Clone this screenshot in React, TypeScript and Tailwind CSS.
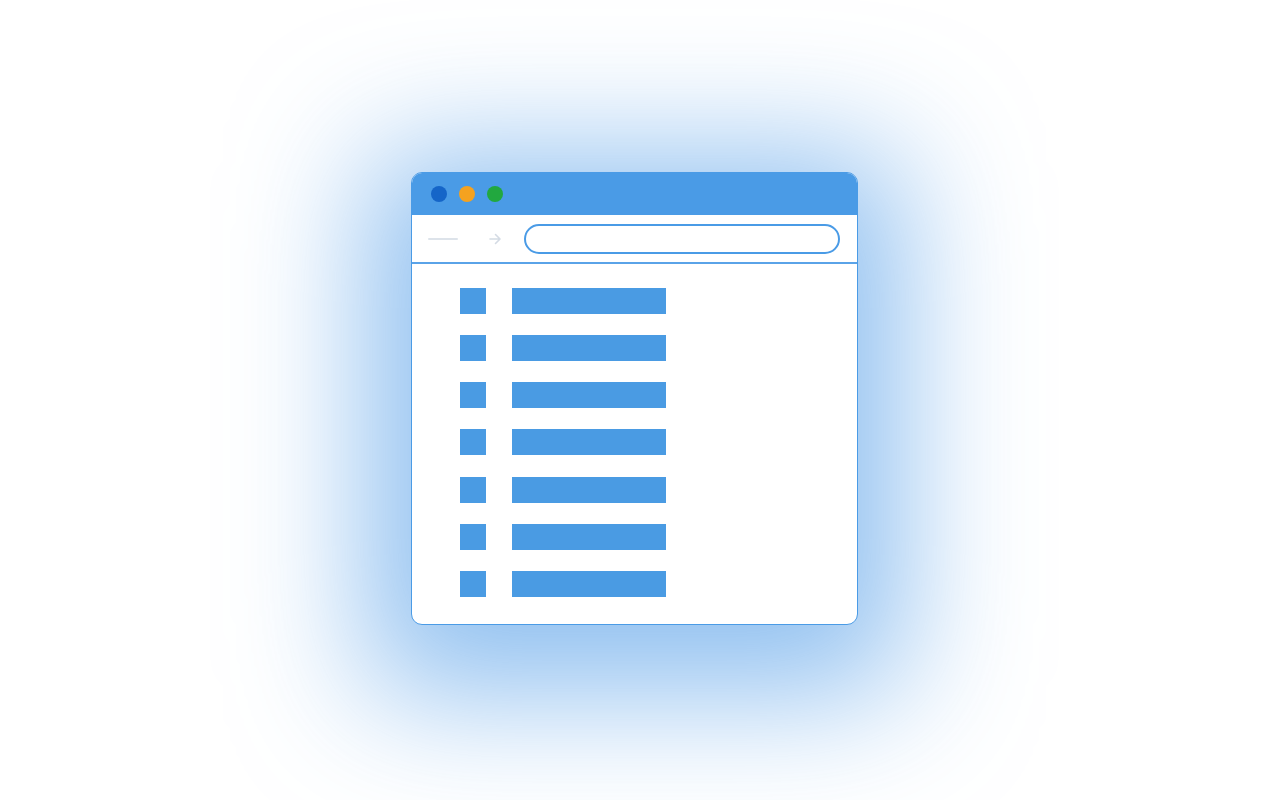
import React from "react";

const rows = [0, 1, 2, 3, 4, 5, 6];

export default function App() {
  return (
    <div className="flex h-[800px] w-[1280px] items-center justify-center overflow-hidden bg-white pr-[12px] pb-[4px]">
      <div className="flex h-[453px] w-[447px] flex-col overflow-hidden rounded-[11px] border-[1.5px] border-[#4a9be6] bg-white shadow-[0_25px_130px_45px_rgba(70,150,230,0.6)]">
        {/* title bar */}
        <div className="flex h-[42px] shrink-0 items-center gap-[12px] bg-[#4a9be6] pl-[19px]">
          <span className="h-[16px] w-[16px] rounded-full bg-[#1565c8]" />
          <span className="h-[16px] w-[16px] rounded-full bg-[#f5a21f]" />
          <span className="h-[16px] w-[16px] rounded-full bg-[#22a83f]" />
        </div>
        {/* nav bar */}
        <div className="flex h-[49px] shrink-0 items-center border-b-2 border-[#5aa3e8] pl-[16px] pr-[17px] pt-[2px]">
          <span className="h-[2px] w-[30px] rounded bg-[#dde3ea]" />
          <svg className="ml-[29px]" width="16" height="16" viewBox="0 0 16 16" fill="none">
            <path d="M3 8h9M8.5 3.5l4.5 4.5-4.5 4.5" stroke="#d4dbe4" strokeWidth="1.6" strokeLinecap="round" strokeLinejoin="round" />
          </svg>
          <div className="ml-[21px] h-[30px] flex-1 rounded-full border-[2px] border-[#4a9be6] bg-white" />
        </div>
        {/* list */}
        <div className="flex flex-col gap-[21.33px] pl-[48px] pt-[24px]">
          {rows.map((r) => (
            <div key={r} className="flex items-center gap-[26px]">
              <span className="h-[26px] w-[26px] bg-[#4a9be3]" />
              <span className="h-[26px] w-[154px] bg-[#4a9be3]" />
            </div>
          ))}
        </div>
      </div>
    </div>
  );
}
